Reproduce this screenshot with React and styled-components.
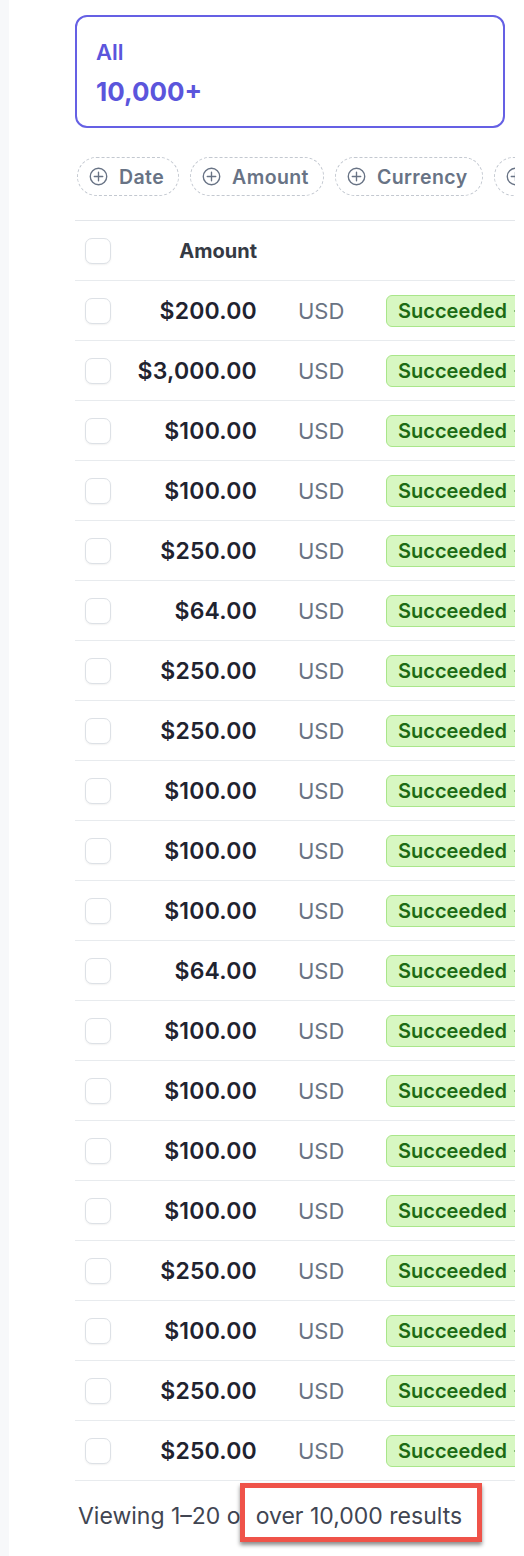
import React from 'react';
import styled, { createGlobalStyle } from 'styled-components';

const GlobalStyle = createGlobalStyle`
  html, body {
    margin: 0;
    padding: 0;
    background: #ffffff;
  }
  body {
    font-family: Inter, "Liberation Sans", sans-serif;
    -webkit-font-smoothing: antialiased;
  }
`;

const Page = styled.div`
  display: flex;
  width: 524px;
  min-height: 1556px;
`;

const SideStrip = styled.div`
  width: 9px;
  flex-shrink: 0;
  background: #f7f8fa;
`;

const Main = styled.main`
  width: 440px;
  margin-left: 66px;
  padding-top: 15px;
  overflow: hidden;
`;

const Card = styled.div`
  box-sizing: border-box;
  width: 430px;
  height: 113px;
  border: 2px solid #6560e4;
  border-radius: 12px;
  padding: 20px 19px 0;
  color: #5b55dc;
`;

const CardLabel = styled.div`
  font-size: 22px;
  font-weight: 600;
  line-height: 30px;
`;

const CardCount = styled.div`
  font-size: 26px;
  font-weight: 700;
  line-height: 34px;
  margin-top: 8px;
`;

const Filters = styled.div`
  display: flex;
  gap: 11px;
  margin-top: 29px;
  margin-left: 2px;
  white-space: nowrap;
`;

const Pill = styled.div`
  box-sizing: border-box;
  display: flex;
  align-items: center;
  gap: 11px;
  height: 39px;
  padding: 0 14px 0 11px;
  border: 1.5px dashed #c3c8d0;
  border-radius: 20px;
  color: #687385;
  font-size: 19.5px;
  font-weight: 600;
  letter-spacing: 0.4px;
  flex-shrink: 0;
`;

const Table = styled.div`
  margin-top: 24px;
  border-top: 1px solid #e3e6ea;
  width: 440px;
`;

const Row = styled.div`
  box-sizing: border-box;
  display: flex;
  align-items: center;
  height: 60px;
  border-bottom: 1px solid #e8ebee;
  white-space: nowrap;
`;

const Check = styled.span`
  box-sizing: border-box;
  width: 26px;
  height: 26px;
  margin-left: 10px;
  border: 1.5px solid #dde1e6;
  border-radius: 7px;
  background: #fff;
  box-shadow: 0 1px 2px rgba(0, 0, 0, 0.06);
  flex-shrink: 0;
`;

const AmountCell = styled.div`
  width: 146px;
  text-align: right;
  color: ${(p) => (p.head ? '#353a44' : '#1f2330')};
  font-size: ${(p) => (p.head ? '20px' : '23px')};
  font-weight: ${(p) => (p.head ? 700 : 600)};
  letter-spacing: ${(p) => (p.head ? '0' : '0.2px')};
  flex-shrink: 0;
`;

const CurrencyCell = styled.div`
  width: 88px;
  padding-left: 41px;
  color: #6a7383;
  font-size: 22px;
  flex-shrink: 0;
`;

const Badge = styled.span`
  box-sizing: border-box;
  display: inline-flex;
  align-items: center;
  gap: 5px;
  height: 32px;
  padding: 0 11px;
  background: #d7f7c2;
  border: 1px solid #a9e68a;
  border-radius: 6px;
  color: #1c6b14;
  font-size: 20px;
  font-weight: 600;
  flex-shrink: 0;
`;

const Footer = styled.div`
  padding: 20px 0 0 3px;
  font-size: 23px;
  line-height: 30px;
  color: #414552;
  white-space: nowrap;
`;

const Highlight = styled.span`
  position: relative;
  z-index: 1;

  &::before {
    content: '';
    position: absolute;
    left: -16px;
    right: -20px;
    top: -19px;
    bottom: -12px;
    z-index: -1;
    background: #ffffff;
    border: 5px solid #ef5349;
    box-shadow: 0 3px 4px rgba(0, 0, 0, 0.45);
  }
`;

const PlusCircle = () => (
  <svg width="19" height="19" viewBox="0 0 18 18" fill="none" stroke="#687385" strokeWidth="1.3">
    <circle cx="9" cy="9" r="7.8" />
    <path d="M9 5v8M5 9h8" strokeLinecap="round" />
  </svg>
);

const Arrow = () => (
  <svg width="14" height="14" viewBox="0 0 14 14" fill="none" stroke="#1c6b14" strokeWidth="1.6">
    <path d="M3 7h8M8 4l3 3-3 3" strokeLinecap="round" strokeLinejoin="round" />
  </svg>
);

const amounts = [
  '$200.00', '$3,000.00', '$100.00', '$100.00', '$250.00',
  '$64.00', '$250.00', '$250.00', '$100.00', '$100.00',
  '$100.00', '$64.00', '$100.00', '$100.00', '$100.00',
  '$100.00', '$250.00', '$100.00', '$250.00', '$250.00',
];

const filters = ['Date', 'Amount', 'Currency', 'Status'];

function App() {
  return (
    <>
      <GlobalStyle />
      <Page>
        <SideStrip />
        <Main>
          <Card>
            <CardLabel>All</CardLabel>
            <CardCount>10,000+</CardCount>
          </Card>

          <Filters>
            {filters.map((f) => (
              <Pill key={f}>
                <PlusCircle />
                {f}
              </Pill>
            ))}
          </Filters>

          <Table>
            <Row>
              <Check />
              <AmountCell head>Amount</AmountCell>
            </Row>
            {amounts.map((a, i) => (
              <Row key={i}>
                <Check />
                <AmountCell>{a}</AmountCell>
                <CurrencyCell>USD</CurrencyCell>
                <Badge>
                  Succeeded
                  <Arrow />
                </Badge>
              </Row>
            ))}
          </Table>

          <Footer>
            Viewing 1–20 of <Highlight>over 10,000 results</Highlight>
          </Footer>
        </Main>
      </Page>
    </>
  );
}

export default App;
